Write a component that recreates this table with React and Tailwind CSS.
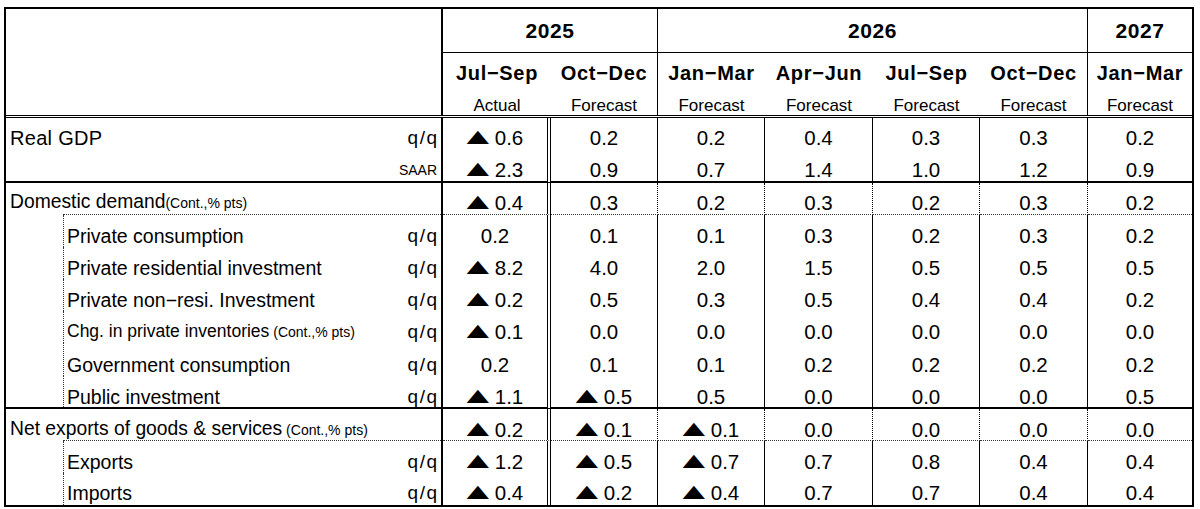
import React from "react";

const rows = [
  { type: "top", label: "Real GDP", unit: "q/q", vals: ["-0.6", "0.2", "0.2", "0.4", "0.3", "0.3", "0.2"], h: "h-[31px]", border: "none", pb: "pb-[1px]" },
  { type: "plain", label: "", unit: "SAAR", vals: ["-2.3", "0.9", "0.7", "1.4", "1.0", "1.2", "0.9"], h: "h-[34px]", border: "solid", pb: "pb-[1px]" },
  { type: "group", label: "Domestic demand", note: "(Cont.,% pts)", vals: ["-0.4", "0.3", "0.2", "0.3", "0.2", "0.3", "0.2"], h: "h-[32px]", border: "dotted", pb: "pb-[1px]" },
  { type: "sub", label: "Private consumption", unit: "q/q", vals: ["0.2", "0.1", "0.1", "0.3", "0.2", "0.3", "0.2"], h: "h-[32px]", border: "none", pb: "pb-[1px]" },
  { type: "sub", label: "Private residential investment", unit: "q/q", vals: ["-8.2", "4.0", "2.0", "1.5", "0.5", "0.5", "0.5"], h: "h-[32px]", border: "none", pb: "pb-[1px]" },
  { type: "sub", label: "Private non\u2212resi. Investment", unit: "q/q", vals: ["-0.2", "0.5", "0.3", "0.5", "0.4", "0.4", "0.2"], h: "h-[32px]", border: "none", pb: "pb-[1px]" },
  { type: "sub", label: "Chg. in private inventories", small: true, note: " (Cont.,% pts)", unit: "q/q", vals: ["-0.1", "0.0", "0.0", "0.0", "0.0", "0.0", "0.0"], h: "h-[32px]", border: "none", pb: "pb-[1px]" },
  { type: "sub", label: "Government consumption", unit: "q/q", vals: ["0.2", "0.1", "0.1", "0.2", "0.2", "0.2", "0.2"], h: "h-[33px]", border: "none", pb: "pb-[1px]" },
  { type: "sub", label: "Public investment", unit: "q/q", vals: ["-1.1", "-0.5", "0.5", "0.0", "0.0", "0.0", "0.5"], h: "h-[33px]", border: "solid", pb: "pb-[0px]" },
  { type: "group", label: "Net exports of goods & services", note: " (Cont.,% pts)", vals: ["-0.2", "-0.1", "-0.1", "0.0", "0.0", "0.0", "0.0"], h: "h-[32px]", border: "dotted", pb: "pb-[0px]" },
  { type: "sub", label: "Exports", unit: "q/q", vals: ["-1.2", "-0.5", "-0.7", "0.7", "0.8", "0.4", "0.4"], h: "h-[32px]", border: "none", pb: "pb-[1px]" },
  { type: "sub", label: "Imports", unit: "q/q", vals: ["-0.4", "-0.2", "-0.4", "0.7", "0.7", "0.4", "0.4"], h: "h-[32px]", border: "none", pb: "pb-[2px]" },
];

const bottomCls = {
  none: "",
  solid: "border-b-2 border-b-black",
  dotted: "border-b border-dotted border-b-[#333]",
};

function Num({ v }) {
  const neg = v.startsWith("-");
  const n = neg ? v.slice(1) : v;
  return (
    <span className="whitespace-nowrap">
      {neg && (
        <span className="inline-flex justify-center w-[22px] mr-[6px] align-baseline">
          <span className="text-[38px] leading-[20px] scale-y-[0.6] origin-bottom">▲</span>
        </span>
      )}
      {n}
    </span>
  );
}

function LabelCell({ r }) {
  if (r.type === "top" || r.type === "plain") {
    return (
      <div className={`${r.h} ${bottomCls[r.border]} border-r-2 border-r-black flex items-end justify-between pl-[4px] pr-[4px] ${r.pb}`}>
        <span className="text-[20px] leading-[20px] tracking-[0.3px]">{r.label}</span>
        {r.unit === "SAAR" ? (
          <span className="text-[14px] leading-[20px]">{r.unit}</span>
        ) : (
          <span className="text-[19px] leading-[20px] tracking-[1.5px] -mr-[1.5px]">{r.unit}</span>
        )}
      </div>
    );
  }
  if (r.type === "group") {
    return (
      <div className={`${r.h} border-r-2 border-r-black flex flex-col justify-end`}>
        <div className={`pl-[4px] text-[19.3px] leading-[20px] ${r.pb} whitespace-nowrap`}>
          <span>{r.label}</span>
          <span className="text-[14px]">{r.note}</span>
        </div>
        <div className="ml-[57px] border-b border-dotted border-b-[#333]" />
      </div>
    );
  }
  return (
    <div className={`${r.h} ${r.border === "solid" ? "border-b-2 border-b-black" : ""} border-r-2 border-r-black flex`}>
      <div className="w-[57px] shrink-0" />
      <div className={`flex-1 border-l border-dotted border-l-[#333] flex items-end justify-between pl-[3px] pr-[4px] ${r.pb}`}>
        <span className={`leading-[20px] whitespace-nowrap ${r.small ? "text-[17.5px]" : "text-[19.5px]"}`}>
          <span>{r.label}</span>
          {r.note && <span className="text-[14px]">{r.note}</span>}
        </span>
        <span className="text-[19px] leading-[20px] tracking-[1.5px] -mr-[1.5px]">{r.unit}</span>
      </div>
    </div>
  );
}

function DataRow({ r }) {
  return (
    <>
      <LabelCell r={r} />
      {r.vals.map((v, i) => (
        <div
          key={i}
          className={`${r.h} ${bottomCls[r.border]} ${
            i === 0 ? "border-r-4 [border-right-style:double] border-r-black" : i < 6 ? "border-r border-r-black" : ""
          } flex items-end justify-center ${r.pb} text-[20.5px] leading-[20px]`}
        >
          <Num v={v} />
        </div>
      ))}
    </>
  );
}

export default function App() {
  return (
    <div className="w-[1200px] h-[509px] bg-white text-black font-['Liberation_Sans',Arial,sans-serif] pt-[7px] pl-[4px]">
      <div className="w-[1190px] border-2 border-black grid grid-cols-[437px_108px_107px_107px_108px_107px_108px_104px]">
        <div className="row-span-2 border-r-2 border-r-black" />
        <div className="col-span-2 h-[44px] border-b border-b-black border-r border-r-black flex items-center justify-center text-[21px] font-bold tracking-[0.6px]">2025</div>
        <div className="col-span-4 h-[44px] border-b border-b-black border-r border-r-black flex items-center justify-center text-[21px] font-bold tracking-[0.6px]">2026</div>
        <div className="h-[44px] border-b border-b-black flex items-center justify-center text-[21px] font-bold tracking-[0.6px]">2027</div>
        {[
          ["Jul\u2212Sep", "Actual", ""],
          ["Oct\u2212Dec", "Forecast", "border-r border-r-black"],
          ["Jan\u2212Mar", "Forecast", ""],
          ["Apr\u2212Jun", "Forecast", ""],
          ["Jul\u2212Sep", "Forecast", ""],
          ["Oct\u2212Dec", "Forecast", "border-r border-r-black"],
          ["Jan\u2212Mar", "Forecast", ""],
        ].map(([q, s, b], i) => (
          <div key={i} className={`h-[62px] ${b} flex flex-col items-center pt-[9px]`}>
            <div className="text-[20px] leading-[22px] font-bold tracking-[0.7px] whitespace-nowrap">{q}</div>
            <div className="text-[17px] leading-[20px] mt-[12px]">{s}</div>
          </div>
        ))}
        <div className="col-span-8 h-[3px] border-y border-black" />
        {rows.map((r, i) => (
          <DataRow key={i} r={r} />
        ))}
      </div>
    </div>
  );
}
